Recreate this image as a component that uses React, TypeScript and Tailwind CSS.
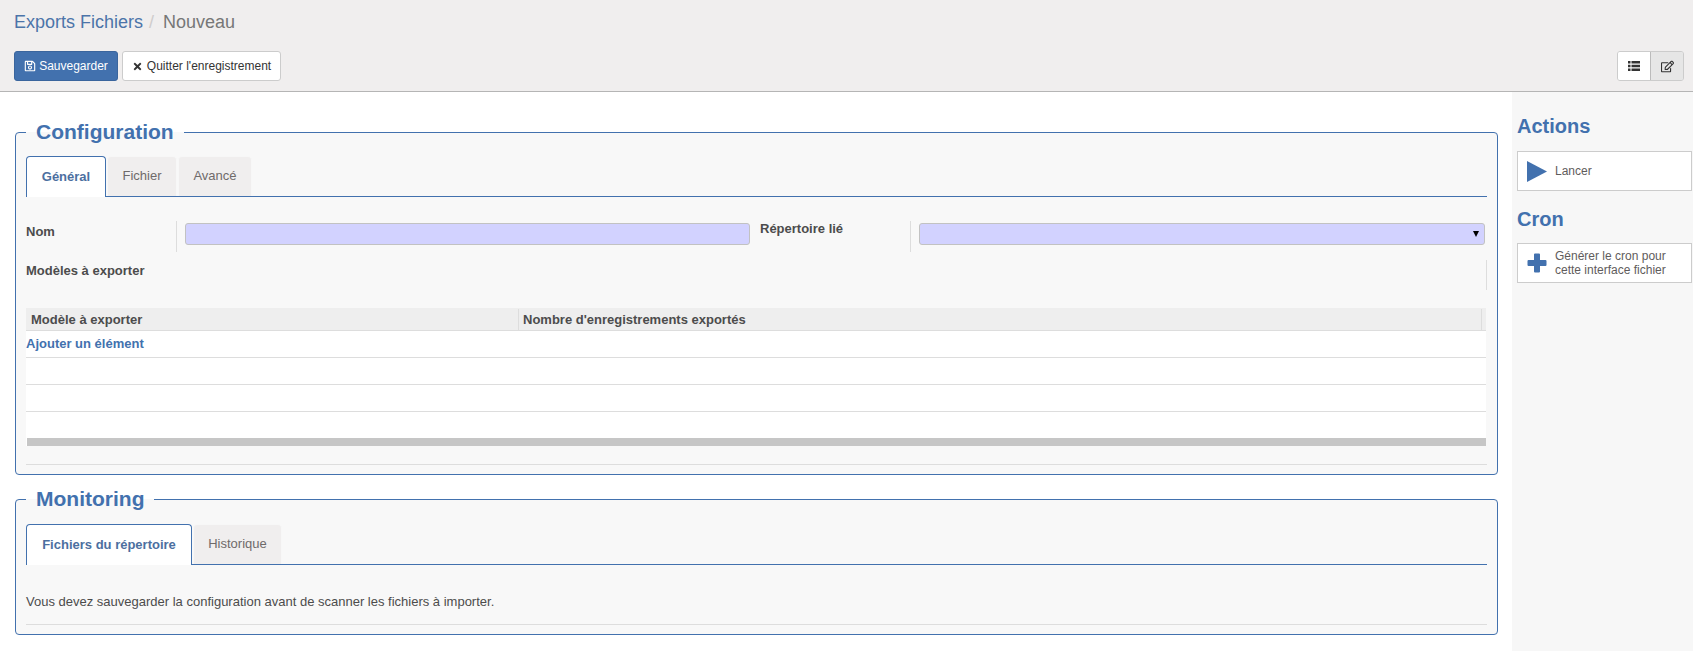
import React from 'react';
import { FaRegSave, FaTimes, FaRegEdit } from 'react-icons/fa';

const Tab: React.FC<{ label: string; active?: boolean; className?: string }> = ({ label, active, className = '' }) =>
    active ? (
        <div className={`relative -mb-px flex h-[41px] items-center justify-center rounded-t border border-b-0 border-[#4271ae] bg-white text-[13px] font-bold text-[#4c6f9f] ${className}`}>
            {label}
        </div>
    ) : (
        <div className={`flex h-[40px] items-center justify-center rounded-t border border-b-0 border-[#f7f7f7] bg-[#f0eeee] pb-[1px] text-[13px] text-[#6f6a6a] ${className}`}>
            {label}
        </div>
    );

const Section: React.FC<{ title: string; className?: string; children: React.ReactNode }> = ({ title, className = '', children }) => (
    <fieldset className={`rounded border border-[#4271ae] bg-[#f8f8f8] px-[10px] ${className}`}>
        <legend className="px-[10px] text-[21px] leading-[24px] font-bold text-[#4271ae]">{title}</legend>
        {children}
    </fieldset>
);

const ActionBox: React.FC<{ icon: React.ReactNode; children: React.ReactNode }> = ({ icon, children }) => (
    <div className="flex h-[40px] items-center border border-[#cccccc] bg-white pl-[9px] text-[12px] leading-[14px] text-[#5f5c5c]">
        <div className="mr-[8px] w-[20px] shrink-0">{icon}</div>
        <div>{children}</div>
    </div>
);

export default function App() {
    return (
        <div className="flex h-[651px] flex-col overflow-hidden bg-white font-['Liberation_Sans',Arial,sans-serif] text-[#4c4c4c]">
            {/* control panel */}
            <div className="h-[92px] shrink-0 border-b border-[#b5b5b5] bg-[#f0eeee] pr-[9px] pl-[14px]">
                <div className="flex h-[51px] items-start pt-[11px] text-[18px] leading-[22px]">
                    <span className="text-[#4c74a9]">Exports Fichiers</span>
                    <span className="ml-[6px] text-[#cfcccc]">/</span>
                    <span className="ml-[9px] text-[#777777]">Nouveau</span>
                </div>
                <div className="flex items-center justify-between">
                    <div className="flex gap-1">
                        <button className="flex h-[30px] w-[104px] items-center justify-center gap-[3px] rounded-[3px] border border-[#3a659d] bg-[#4271ae] text-[12px] text-white">
                            <FaRegSave size={12} />
                            Sauvegarder
                        </button>
                        <button className="flex h-[30px] w-[159px] items-center justify-center gap-[4px] rounded-[3px] border border-[#cccccc] bg-white text-[12px] text-[#333333]">
                            <FaTimes size={11} />
                            Quitter l'enregistrement
                        </button>
                    </div>
                    <div className="flex h-[30px] w-[67px] overflow-hidden rounded-[3px] border border-[#cccccc]">
                        <div className="flex w-[33px] items-center justify-center border-r border-[#bbbbbb] bg-white text-[#333333]">
                            <svg width="12" height="10" viewBox="0 0 12 10" fill="currentColor">
                                <path d="M0 0h2.5v2.5H0zM3.5 0H12v2.5H3.5zM0 3.75h2.5v2.5H0zM3.5 3.75H12v2.5H3.5zM0 7.5h2.5V10H0zM3.5 7.5H12V10H3.5z" />
                            </svg>
                        </div>
                        <div className="flex flex-1 items-center justify-center bg-[#e6e6e6] text-[#333333]">
                            <FaRegEdit size={13} />
                        </div>
                    </div>
                </div>
            </div>

            <div className="flex min-h-0 flex-1">
                {/* main form */}
                <div className="w-[1512px] shrink-0 pt-[28px] pl-[15px]">
                    <Section title="Configuration" className="h-[355px] w-[1483px]">
                        <div className="mt-[12px] flex gap-[1px] border-b border-[#4271ae]">
                            <Tab label="Général" active className="w-[80px]" />
                            <Tab label="Fichier" className="w-[70px]" />
                            <Tab label="Avancé" className="w-[74px]" />
                        </div>

                        <div className="mt-[24px] flex h-[31px] text-[13px] leading-[15px]">
                            <div className="w-[150px] pt-[3px] font-bold">Nom</div>
                            <div className="mr-2 h-[31px] border-l border-[#dddddd]" />
                            <div className="mt-[2px] h-[22px] w-[565px] rounded-[3px] border border-[#c2c2c2] bg-[#d2d2ff]" />
                            <div className="w-[160px] pl-[10px] font-bold">Répertoire lié</div>
                            <div className="mr-2 h-[31px] border-l border-[#dddddd]" />
                            <div className="relative mt-[2px] h-[22px] w-[566px] rounded-[3px] border border-[#c2c2c2] bg-[#d2d2ff]">
                                <span className="absolute top-[7px] right-[5px] h-0 w-0 border-x-[3px] border-t-[6px] border-x-transparent border-t-black" />
                            </div>
                        </div>

                        <div className="mt-[8px] flex h-[31px] justify-between text-[13px] leading-[15px] font-bold">
                            <div className="pt-[3px]">Modèles à exporter</div>
                            <div className="h-[30px] border-l border-[#dddddd]" />
                        </div>

                        <div className="mt-[17px] w-[1460px] bg-white text-[13px]">
                            <div className="flex h-[23px] items-center border-b border-[#dddddd] bg-[#eeeeee] pt-[1px] font-bold">
                                <div className="flex h-full w-[493px] items-center border-r border-[#dddddd] pl-[5px]">Modèle à exporter</div>
                                <div className="flex h-full flex-1 items-center border-r border-[#dddddd] pl-[4px]">Nombre d'enregistrements exportés</div>
                                <div className="w-[4px]" />
                            </div>
                            <div className="flex h-[27px] items-center border-b border-[#dddddd] font-bold text-[#4271ae]">Ajouter un élément</div>
                            <div className="h-[27px] border-b border-[#dddddd]" />
                            <div className="h-[27px] border-b border-[#dddddd]" />
                            <div className="h-[26px]" />
                            <div className="ml-[1px] h-[8px] bg-[#c6c6c6]" />
                        </div>
                        <div className="mt-[18px] border-t border-[#dddddd]" />
                    </Section>

                    <Section title="Monitoring" className="mt-[12px] h-[148px] w-[1483px]">
                        <div className="mt-[13px] flex gap-[1px] border-b border-[#4271ae]">
                            <Tab label="Fichiers du répertoire" active className="w-[166px]" />
                            <Tab label="Historique" className="w-[89px]" />
                        </div>
                        <div className="mt-[28px] text-[13px] leading-[18px]">Vous devez sauvegarder la configuration avant de scanner les fichiers à importer.</div>
                        <div className="mt-[13px] border-t border-[#dddddd]" />
                    </Section>
                </div>

                {/* sidebar */}
                <div className="flex-1 bg-[#f7f7f7] pt-[22px] pr-[1px] pl-[5px]">
                    <div className="mb-[13px] text-[20px] leading-[24px] font-bold text-[#4271ae]">Actions</div>
                    <ActionBox
                        icon={
                            <svg width="20" height="21" viewBox="0 0 20 21">
                                <path d="M0 0 L20 10.5 L0 21 Z" fill="#4271ae" />
                            </svg>
                        }
                    >
                        Lancer
                    </ActionBox>
                    <div className="mt-[16px] mb-[12px] text-[20px] leading-[24px] font-bold text-[#4271ae]">Cron</div>
                    <ActionBox
                        icon={
                            <svg width="20" height="20" viewBox="0 0 20 20">
                                <path d="M7 1.5 a1 1 0 0 1 1 -1 h4 a1 1 0 0 1 1 1 V7 h5.5 a1 1 0 0 1 1 1 v4 a1 1 0 0 1 -1 1 H13 v5.5 a1 1 0 0 1 -1 1 H8 a1 1 0 0 1 -1 -1 V13 H1.5 a1 1 0 0 1 -1 -1 V8 a1 1 0 0 1 1 -1 H7 Z" fill="#4271ae" />
                            </svg>
                        }
                    >
                        Générer le cron pour
                        <br />
                        cette interface fichier
                    </ActionBox>
                </div>
            </div>
        </div>
    );
}
